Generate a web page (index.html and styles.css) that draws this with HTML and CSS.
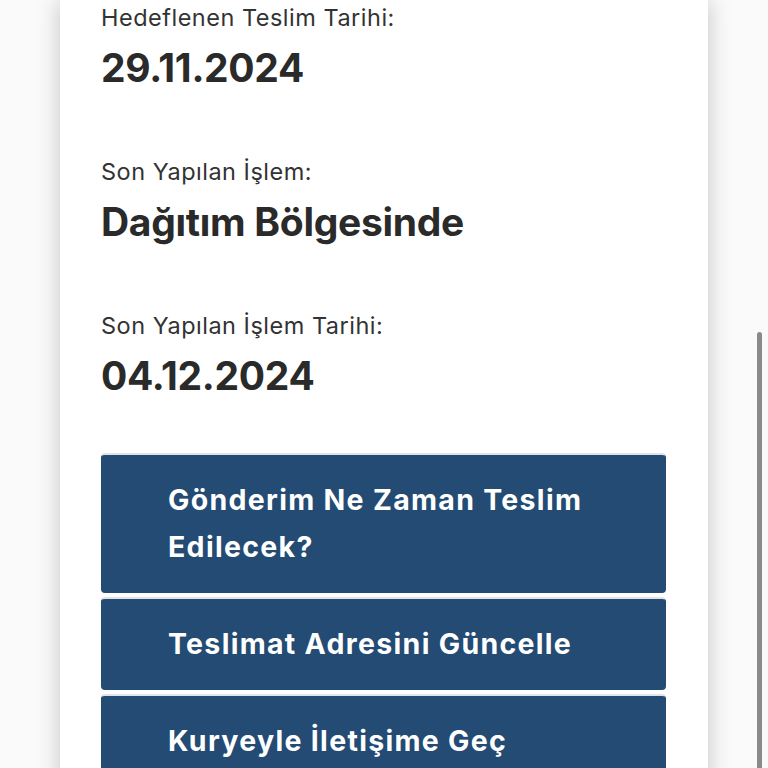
FILE: index.html
```html
<!DOCTYPE html>
<html lang="tr">
<head>
  <meta charset="UTF-8" />
  <meta name="viewport" content="width=device-width, initial-scale=1.0" />
  <title>Gönderi Takibi</title>
  <link rel="stylesheet" href="styles.css">
</head>
<body>

  <div class="tracking-card">
    <div class="field">
      <p class="field-label">Hedeflenen Teslim Tarihi:</p>
      <p class="field-value">29.11.2024</p>
    </div>
    <div class="field">
      <p class="field-label">Son Yapılan İşlem:</p>
      <p class="field-value">Dağıtım Bölgesinde</p>
    </div>
    <div class="field">
      <p class="field-label">Son Yapılan İşlem Tarihi:</p>
      <p class="field-value">04.12.2024</p>
    </div>

    <div class="action-list">
      <button class="action-btn">Gönderim Ne Zaman Teslim Edilecek?</button>
      <button class="action-btn">Teslimat Adresini Güncelle</button>
      <button class="action-btn">Kuryeyle İletişime Geç</button>
    </div>
  </div>

  <div class="scroll-thumb"></div>

</body>
</html>
```

FILE: styles.css
```css
body {
  font-family: Inter, "Liberation Sans", sans-serif;
  background: #fafafa;
  margin: 0;
  padding: 0;
  color: #2b2b2b;
  overflow: hidden;
}

.tracking-card {
  width: 648px;
  margin: 0 auto;
  box-sizing: border-box;
  background: white;
  padding: 3px 42px 40px 41px;
  box-shadow: 0 0 22px rgba(0, 0, 0, 0.22);
  min-height: 900px;
}

.field {
  margin-bottom: 67px;
}

.field-label {
  font-size: 23.5px;
  line-height: 30px;
  letter-spacing: 0.5px;
  margin: 0 0 13px;
  color: #333;
}

.field-value {
  font-size: 39px;
  line-height: 44px;
  font-weight: 700;
  letter-spacing: -0.3px;
  margin: 0;
  color: #2a2a2a;
}

.action-list {
  display: flex;
  flex-direction: column;
  gap: 4px;
  margin-top: -12px;
}

.action-btn {
  display: block;
  width: 100%;
  text-align: left;
  font-family: inherit;
  font-size: 28.5px;
  font-weight: 700;
  line-height: 47px;
  letter-spacing: 1.3px;
  color: white;
  background: #234b73;
  border: none;
  border-top: 2px solid #dfe4e9;
  border-radius: 4px;
  padding: 21px 67px 23px 67px;
  cursor: pointer;
}

.scroll-thumb {
  position: fixed;
  right: 6px;
  top: 332px;
  width: 5px;
  height: 460px;
  border-radius: 3px;
  background: #8a8a8a;
}
```
